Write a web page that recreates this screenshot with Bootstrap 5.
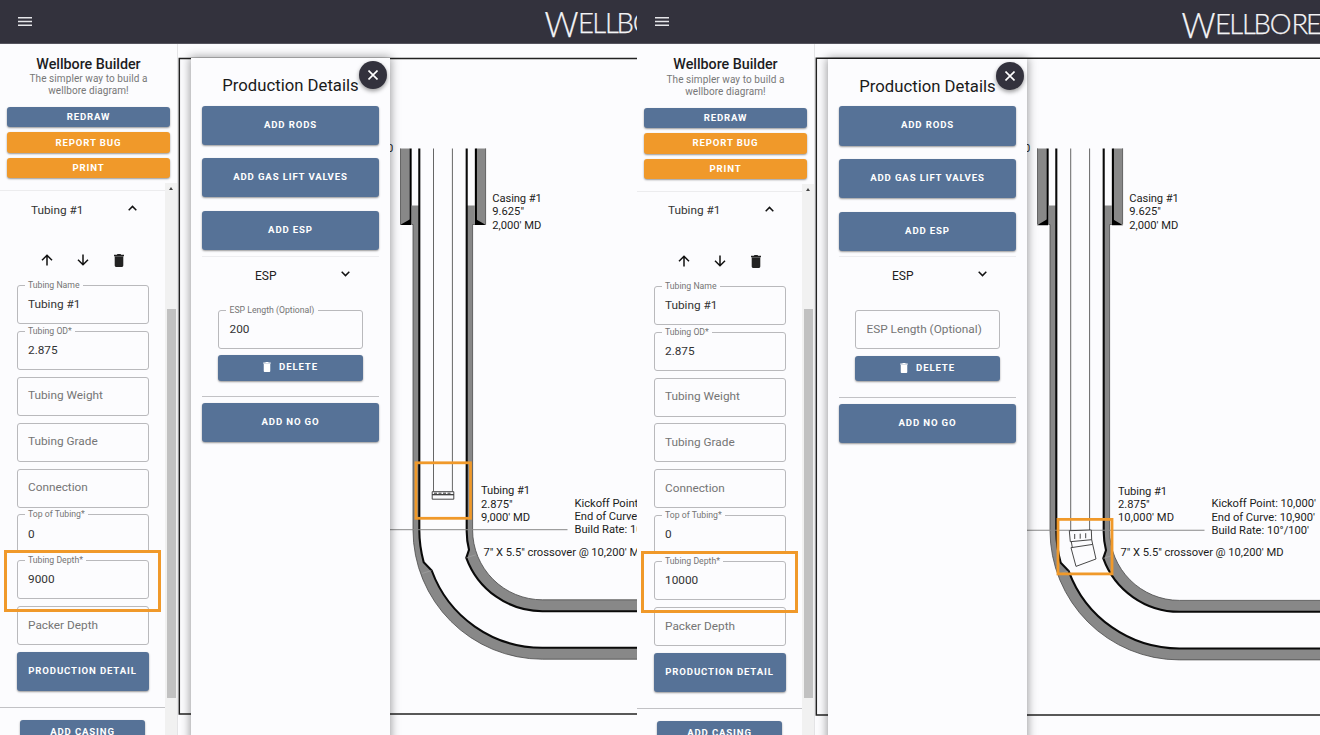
<!DOCTYPE html>
<html lang="en">
<head>
<meta charset="utf-8">
<meta name="viewport" content="width=device-width, initial-scale=1">
<title>Wellbore Builder</title>
<link href="https://cdn.jsdelivr.net/npm/bootstrap@5.3.0/dist/css/bootstrap.min.css" rel="stylesheet">
<script src="https://cdn.jsdelivr.net/npm/bootstrap@5.3.0/dist/js/bootstrap.bundle.min.js"></script>
<style>
  body{font-family:Roboto,"Liberation Sans",sans-serif;background:#fcfcfe;color:#222;width:1320px;height:735px;overflow:hidden}
  svg{display:block}
  .pane{height:735px;overflow:hidden;background:#fcfcfe}
  .pane-a{width:637px}
  .pane-b{width:683px}
  .appbar{height:43.5px;background:#33323d;flex:none;border-bottom:1px solid #55545e}
  .pane-b .appbar{height:44.3px}
  .side{width:178px;flex:none;border-right:1px solid #e4e4e6}
  .head-txt{height:63.3px;padding-top:12.2px;line-height:12px;text-align:center}
  .brand-title{font-size:14.3px;font-weight:500;line-height:17.5px;color:#1d1d1f;letter-spacing:-.02px}
  .brand-sub{font-size:10px;line-height:12px;color:#777;letter-spacing:.08px}
  .mbtn{border:0;border-radius:3px;padding:0 0 1.5px;color:#fff;font-size:9.6px;font-weight:700;letter-spacing:.86px;line-height:1;height:39.2px;
    display:flex;align-items:center;justify-content:center;white-space:nowrap;background:#567297;box-shadow:0 1px 2px rgba(0,0,0,.4)}
  .mbtn.slim{height:20.7px;padding-bottom:.6px}
  .mbtn.amber{background:#f0992a}
  .slims{gap:4.8px;padding:0 7px}
  .scroller{height:560px;overflow:hidden;margin-top:4.7px}
  .track{width:12px;flex:none;background:#f1f1f1}
  .thumb{width:9px;height:389px;background:#c1c1c1;margin:118.5px auto 0 2px}
  .tick{width:0;height:0;border:2.5px solid transparent;border-top:0;border-bottom:3px solid #444;margin:4px 0 0 3.5px}
  .group-head{height:38px;border-top:1px solid #ececee;margin-top:7px;padding:1.5px 28.5px 0 31px;font-size:11.8px;color:#333}
  .tools{height:57px;padding:26px 0 0 40.5px;gap:24px}
  .tf{position:relative;height:39px;border:1px solid #b9b9bc;border-radius:3px;padding:0 10.5px;display:flex;align-items:center;font-size:11.8px;color:#757575;white-space:nowrap}
  .tf.filled{color:#333;padding-top:1px}
  .tf .cap{position:absolute;top:-7px;left:7px;padding:0 3.5px;background:#fcfcfe;font-size:8.7px;line-height:12px;color:#757575}
  .fields{gap:6.85px;padding:0 16.5px}
  .rule{height:1.2px;background:#c2c2c5;margin:0}
  .stage{position:relative;overflow:hidden}
  .drawer{position:absolute;left:13px;top:14.5px;width:199px;bottom:0;background:#fcfcfe;box-shadow:0 0 9px 1px rgba(0,0,0,.38);padding:12px 11px 0}
  .drawer-title{font-size:16.7px;line-height:31px;height:35.6px;text-align:center;color:#1a1a1a;white-space:nowrap}
  .stack{gap:13.5px}
  .close-x{position:absolute;right:3px;top:3px;width:28px;height:28px;border-radius:50%;background:#33323d;box-shadow:0 2px 4px rgba(0,0,0,.4)}
  .esp-head{height:37px;border-top:1px solid #ededf0;margin-top:5.5px;padding:2px 29px 0 53px;font-size:12px;color:#222}
  .esp-body{padding-top:17px;gap:6.5px}
  .hilite{position:absolute;left:-13.5px;right:-13px;top:-11.5px;height:62px;border:3px solid #f0992a;z-index:3}
  text.note,.note text{font-family:Roboto,"Liberation Sans",sans-serif;font-size:11.2px;fill:#1c1c1c}
  .logo text{font-family:Lato,"Open Sans",sans-serif;font-weight:300;fill:#f4f4f6;stroke:#f4f4f6;stroke-width:.25}
</style>
</head>
<body>

<svg width="0" height="0" class="position-absolute" aria-hidden="true">
  <defs>
    <symbol id="i-menu" viewBox="0 0 14 9"><path d="M0 .8h14M0 4.5h14M0 8.2h14" stroke="#e6e6ea" stroke-width="1.4"/></symbol>
    <symbol id="i-up" viewBox="0 0 12 12"><path d="M6 11.5V1.3M1 6.2l5-5 5 5" fill="none" stroke="#111" stroke-width="1.5"/></symbol>
    <symbol id="i-down" viewBox="0 0 12 12"><path d="M6 .5v10.2M1 5.8l5 5 5-5" fill="none" stroke="#111" stroke-width="1.5"/></symbol>
    <symbol id="i-trash" viewBox="0 0 10 13"><path d="M0 .8h2.8L3.5 0h3l.7.8H10v1.4H0zM.7 2.6h8.6v9q0 1.4-1.3 1.4H2Q.7 13 .7 11.6z" fill="currentColor"/></symbol>
    <symbol id="i-chev" viewBox="0 0 9 6"><path d="M.7 .8l3.8 3.8L8.3 .8" fill="none" stroke="#111" stroke-width="1.5"/></symbol>
    <symbol id="i-chevup" viewBox="0 0 9 6"><path d="M.7 5.2l3.8-3.8 3.8 3.8" fill="none" stroke="#111" stroke-width="1.5"/></symbol>
    <!-- wellbore: casings, crossover and build curve -->
    <g id="well">
      <path d="M400.3 148H409.7V224H400.3zM476.5 148H485.8V224H476.5z" fill="#888"/>
      <path d="M400.5 148V224M485.6 148V224" stroke="#555" stroke-width=".8"/>
      <path d="M410.6 148V224M475.9 148V224" stroke="#000" stroke-width="2.1"/>
      <path d="M400 224.6L411 218.3V224.6zM486 224.6L475 218.3V224.6z" fill="#000"/>
      <path d="M411.6 205H419.3V529.5A123 123 0 0 0 423.7 561.7L431.7 570A117.8 117.8 0 0 0 542.3 647.3H690V658.7H542.3A129.3 129.3 0 0 1 413 529.5V224H411.6z" fill="#888"/>
      <path d="M474.9 205H466.7V529.5A75.6 75.6 0 0 0 469 549.3L466.3 557.3A81.2 81.2 0 0 0 542.3 610.7H690V599.3H542.3A69.8 69.8 0 0 1 472.6 529.5V224H474.9z" fill="#888"/>
      <path d="M411.6 224H413V529.5A129.3 129.3 0 0 0 542.3 658.7H690M474.9 224H472.6V529.5A69.8 69.8 0 0 0 542.3 599.3H690" fill="none" stroke="#4a4a4a" stroke-width=".8"/>
      <path d="M419.3 148V529.5A123 123 0 0 0 423.7 561.7L431.7 570A117.8 117.8 0 0 0 542.3 647.3H690M466.7 148V529.5A75.6 75.6 0 0 0 469 549.3L466.3 557.3A81.2 81.2 0 0 0 542.3 610.7H690" fill="none" stroke="#0a0a0a" stroke-width="2.1"/>
      <path d="M422 573l9.5-3M466.3 557.3l9.5-3" stroke="#aaa" stroke-width=".5"/>
      <path d="M380 529.2H567.5" stroke="#888" stroke-width="1"/>
    </g>
    <g id="notes" class="note">
      <text x="387" y="151.5">0</text>
      <text x="492.3" y="201.4" textLength="49.5">Casing #1</text>
      <text x="492.3" y="214.8">9.625"</text>
      <text x="492.3" y="228.4" textLength="49">2,000' MD</text>
      <text x="481" y="493.7" textLength="49">Tubing #1</text>
      <text x="481" y="507">2.875"</text>
      <text x="574.5" y="506.4" textLength="104.500">Kickoff Point: 10,000'</text>
      <text x="574.5" y="519.7" textLength="103.500">End of Curve: 10,900'</text>
      <text x="574.5" y="532.9" textLength="97.500">Build Rate: 10°/100'</text>
      <text x="483.5" y="555.2" textLength="163">7" X 5.5" crossover @ 10,200' MD</text>
    </g>
  </defs>
</svg>

<main class="d-flex">

  <!-- 9,000 ft tubing -->
  <section class="pane pane-a d-flex flex-column flex-shrink-0">
    <header class="appbar d-flex align-items-center">
      <svg class="ms-3" width="16" height="9" viewBox="0 0 16 9"><use href="#i-menu" x="2" width="14" height="9"/></svg>
      <svg class="logo ms-auto" width="93" height="42" viewBox="544 0 93 42"><text x="544.500" y="36.500" font-size="36" textLength="34" lengthAdjust="spacingAndGlyphs">W</text><text x="577.900 592.300 604.900 616.600 632.800" y="33.200" font-size="27.500">ELLBO</text></svg>
    </header>
    <div class="d-flex flex-grow-1">
      <aside class="side d-flex flex-column">
        <div class="head-txt"><div class="brand-title">Wellbore Builder</div><div class="brand-sub">The simpler way to build a<br>wellbore diagram!</div></div>
        <div class="slims d-flex flex-column">
          <button class="btn mbtn slim">REDRAW</button>
          <button class="btn mbtn slim amber">REPORT BUG</button>
          <button class="btn mbtn slim amber">PRINT</button>
        </div>
        <div class="scroller d-flex">
          <div class="flex-grow-1">
            <div class="group-head d-flex align-items-center justify-content-between"><span>Tubing #1</span><svg class="mb-1" width="9" height="6"><use href="#i-chevup"/></svg></div>
            <div class="tools d-flex align-items-start"><svg width="12" height="12"><use href="#i-up"/></svg><svg width="12" height="12"><use href="#i-down"/></svg><svg style="margin-left:1px" width="10" height="13"><use href="#i-trash"/></svg></div>
            <div class="fields d-flex flex-column">
              <div class="tf filled"><span class="cap">Tubing Name</span>Tubing #1</div>
              <div class="tf filled"><span class="cap">Tubing OD*</span>2.875</div>
              <div class="tf">Tubing Weight</div>
              <div class="tf">Tubing Grade</div>
              <div class="tf">Connection</div>
              <div class="tf filled"><span class="cap">Top of Tubing*</span>0</div>
              <div class="tf filled"><span class="hilite"></span><span class="cap">Tubing Depth*</span>9000</div>
              <div class="tf">Packer Depth</div>
              <button class="btn mbtn">PRODUCTION DETAIL</button>
            </div>
            <div class="rule mt-3"></div>
            <div class="px-1 mx-3" style="padding-top:11.500px"><button class="btn mbtn w-100" style="height:25px">ADD CASING</button></div>
          </div>
          <div class="track"><div class="tick"></div><div class="thumb"></div></div>
        </div>
      </aside>
      <div class="stage flex-grow-1">
        <svg width="459" height="691.500" viewBox="178 43.500 459 691.500">
          <path d="M660 58H179.300V713.500H660" fill="none" stroke="#222" stroke-width="1.500"/>
          <use href="#well"/><use href="#notes"/>
          <path d="M433.500 148V491M452.400 148V491" stroke="#666"/>
          <path d="M432.200 491.200H453.800V494.200H432.200zM432.200 494.200H453.800V498.700H432.200z" fill="#fcfcfe" stroke="#333" stroke-width=".9"/>
          <path d="M434 492.700H452" stroke="#333" stroke-width="1" stroke-dasharray="3 1.500"/>
          <text class="note" x="481" y="520.300" textLength="49">9,000' MD</text>
          <rect x="416" y="462.300" width="54.500" height="55.500" fill="none" stroke="#f0992a" stroke-width="2.800"/>
        </svg>
        <div class="drawer">
          <span class="close-x d-flex align-items-center justify-content-center"><svg width="10" height="10" viewBox="0 0 10 10"><path d="M.5 .5l9 9M9.500 .5l-9 9" stroke="#fff" stroke-width="1.600"/></svg></span>
          <div class="drawer-title">Production Details</div>
          <div class="stack d-flex flex-column">
            <button class="btn mbtn">ADD RODS</button>
            <button class="btn mbtn">ADD GAS LIFT VALVES</button>
            <button class="btn mbtn">ADD ESP</button>
          </div>
          <div class="esp-head d-flex align-items-center justify-content-between"><span>ESP</span><svg class="mb-1" width="9" height="6"><use href="#i-chev"/></svg></div>
          <div class="esp-body mx-3 d-flex flex-column">
            <div class="tf filled"><span class="cap">ESP Length (Optional)</span>200</div>
            <button class="btn mbtn" style="height:25.500px"><svg class="me-2" width="8" height="10" viewBox="0 0 10 13"><use href="#i-trash"/></svg>DELETE</button>
          </div>
          <div class="rule" style="margin-top:15.500px"></div>
          <button class="btn mbtn w-100" style="margin-top:5.800px">ADD NO GO</button>
        </div>
      </div>
    </div>
  </section>

  <!-- 10,000 ft tubing -->
  <section class="pane pane-b d-flex flex-column flex-shrink-0">
    <header class="appbar d-flex align-items-center">
      <svg class="ms-3" width="16" height="9" viewBox="0 0 16 9"><use href="#i-menu" x="2" width="14" height="9"/></svg>
      <svg class="logo ms-auto" width="139" height="42" viewBox="544 0 139 42"><text x="544.500" y="36.500" font-size="36" textLength="34" lengthAdjust="spacingAndGlyphs">W</text><text x="577.900 592.300 604.900 616.600 632.800 654.400 668.900" y="33.200" font-size="27.500">ELLBORE</text></svg>
    </header>
    <div class="d-flex flex-grow-1">
      <aside class="side d-flex flex-column">
        <div class="head-txt"><div class="brand-title">Wellbore Builder</div><div class="brand-sub">The simpler way to build a<br>wellbore diagram!</div></div>
        <div class="slims d-flex flex-column">
          <button class="btn mbtn slim">REDRAW</button>
          <button class="btn mbtn slim amber">REPORT BUG</button>
          <button class="btn mbtn slim amber">PRINT</button>
        </div>
        <div class="scroller d-flex">
          <div class="flex-grow-1">
            <div class="group-head d-flex align-items-center justify-content-between"><span>Tubing #1</span><svg class="mb-1" width="9" height="6"><use href="#i-chevup"/></svg></div>
            <div class="tools d-flex align-items-start"><svg width="12" height="12"><use href="#i-up"/></svg><svg width="12" height="12"><use href="#i-down"/></svg><svg style="margin-left:1px" width="10" height="13"><use href="#i-trash"/></svg></div>
            <div class="fields d-flex flex-column">
              <div class="tf filled"><span class="cap">Tubing Name</span>Tubing #1</div>
              <div class="tf filled"><span class="cap">Tubing OD*</span>2.875</div>
              <div class="tf">Tubing Weight</div>
              <div class="tf">Tubing Grade</div>
              <div class="tf">Connection</div>
              <div class="tf filled"><span class="cap">Top of Tubing*</span>0</div>
              <div class="tf filled"><span class="hilite"></span><span class="cap">Tubing Depth*</span>10000</div>
              <div class="tf">Packer Depth</div>
              <button class="btn mbtn">PRODUCTION DETAIL</button>
            </div>
            <div class="rule mt-3"></div>
            <div class="px-1 mx-3" style="padding-top:11.500px"><button class="btn mbtn w-100" style="height:25px">ADD CASING</button></div>
          </div>
          <div class="track"><div class="tick"></div><div class="thumb"></div></div>
        </div>
      </aside>
      <div class="stage flex-grow-1">
        <svg width="505" height="690.700" viewBox="178 44.300 505 690.700">
          <g transform="translate(0 .5) scale(1 1.0015)">
          <path d="M700 58H179.300V713.700H700" fill="none" stroke="#222" stroke-width="1.500"/>
          <use href="#well"/><use href="#notes"/>
          <path d="M433.700 148V530M452.600 148V530" stroke="#666"/>
          <text class="note" x="481" y="520.400" textLength="56">10,000' MD</text>
          </g>
          <path d="M432.300 531L454.300 530.300L454.700 540L433.300 542zM434.300 542L435.300 547.700M454.700 540L455.700 544.700M434 548L455.700 544.700L459 559.300L439 566.700zM437.700 534.300V539.300M443.200 534V539M448.700 533.500V538.500" fill="#fcfcfe" stroke="#333" stroke-width=".9"/>
          <rect x="421" y="519.700" width="54" height="54.500" fill="none" stroke="#f0992a" stroke-width="2.800"/>
        </svg>
        <div class="drawer">
          <span class="close-x d-flex align-items-center justify-content-center"><svg width="10" height="10" viewBox="0 0 10 10"><path d="M.5 .5l9 9M9.500 .5l-9 9" stroke="#fff" stroke-width="1.600"/></svg></span>
          <div class="drawer-title">Production Details</div>
          <div class="stack d-flex flex-column">
            <button class="btn mbtn">ADD RODS</button>
            <button class="btn mbtn">ADD GAS LIFT VALVES</button>
            <button class="btn mbtn">ADD ESP</button>
          </div>
          <div class="esp-head d-flex align-items-center justify-content-between"><span>ESP</span><svg class="mb-1" width="9" height="6"><use href="#i-chev"/></svg></div>
          <div class="esp-body mx-3 d-flex flex-column">
            <div class="tf">ESP Length (Optional)</div>
            <button class="btn mbtn" style="height:25.500px"><svg class="me-2" width="8" height="10" viewBox="0 0 10 13"><use href="#i-trash"/></svg>DELETE</button>
          </div>
          <div class="rule" style="margin-top:15.500px"></div>
          <button class="btn mbtn w-100" style="margin-top:5.800px">ADD NO GO</button>
        </div>
      </div>
    </div>
  </section>
</main>
</body>
</html>
